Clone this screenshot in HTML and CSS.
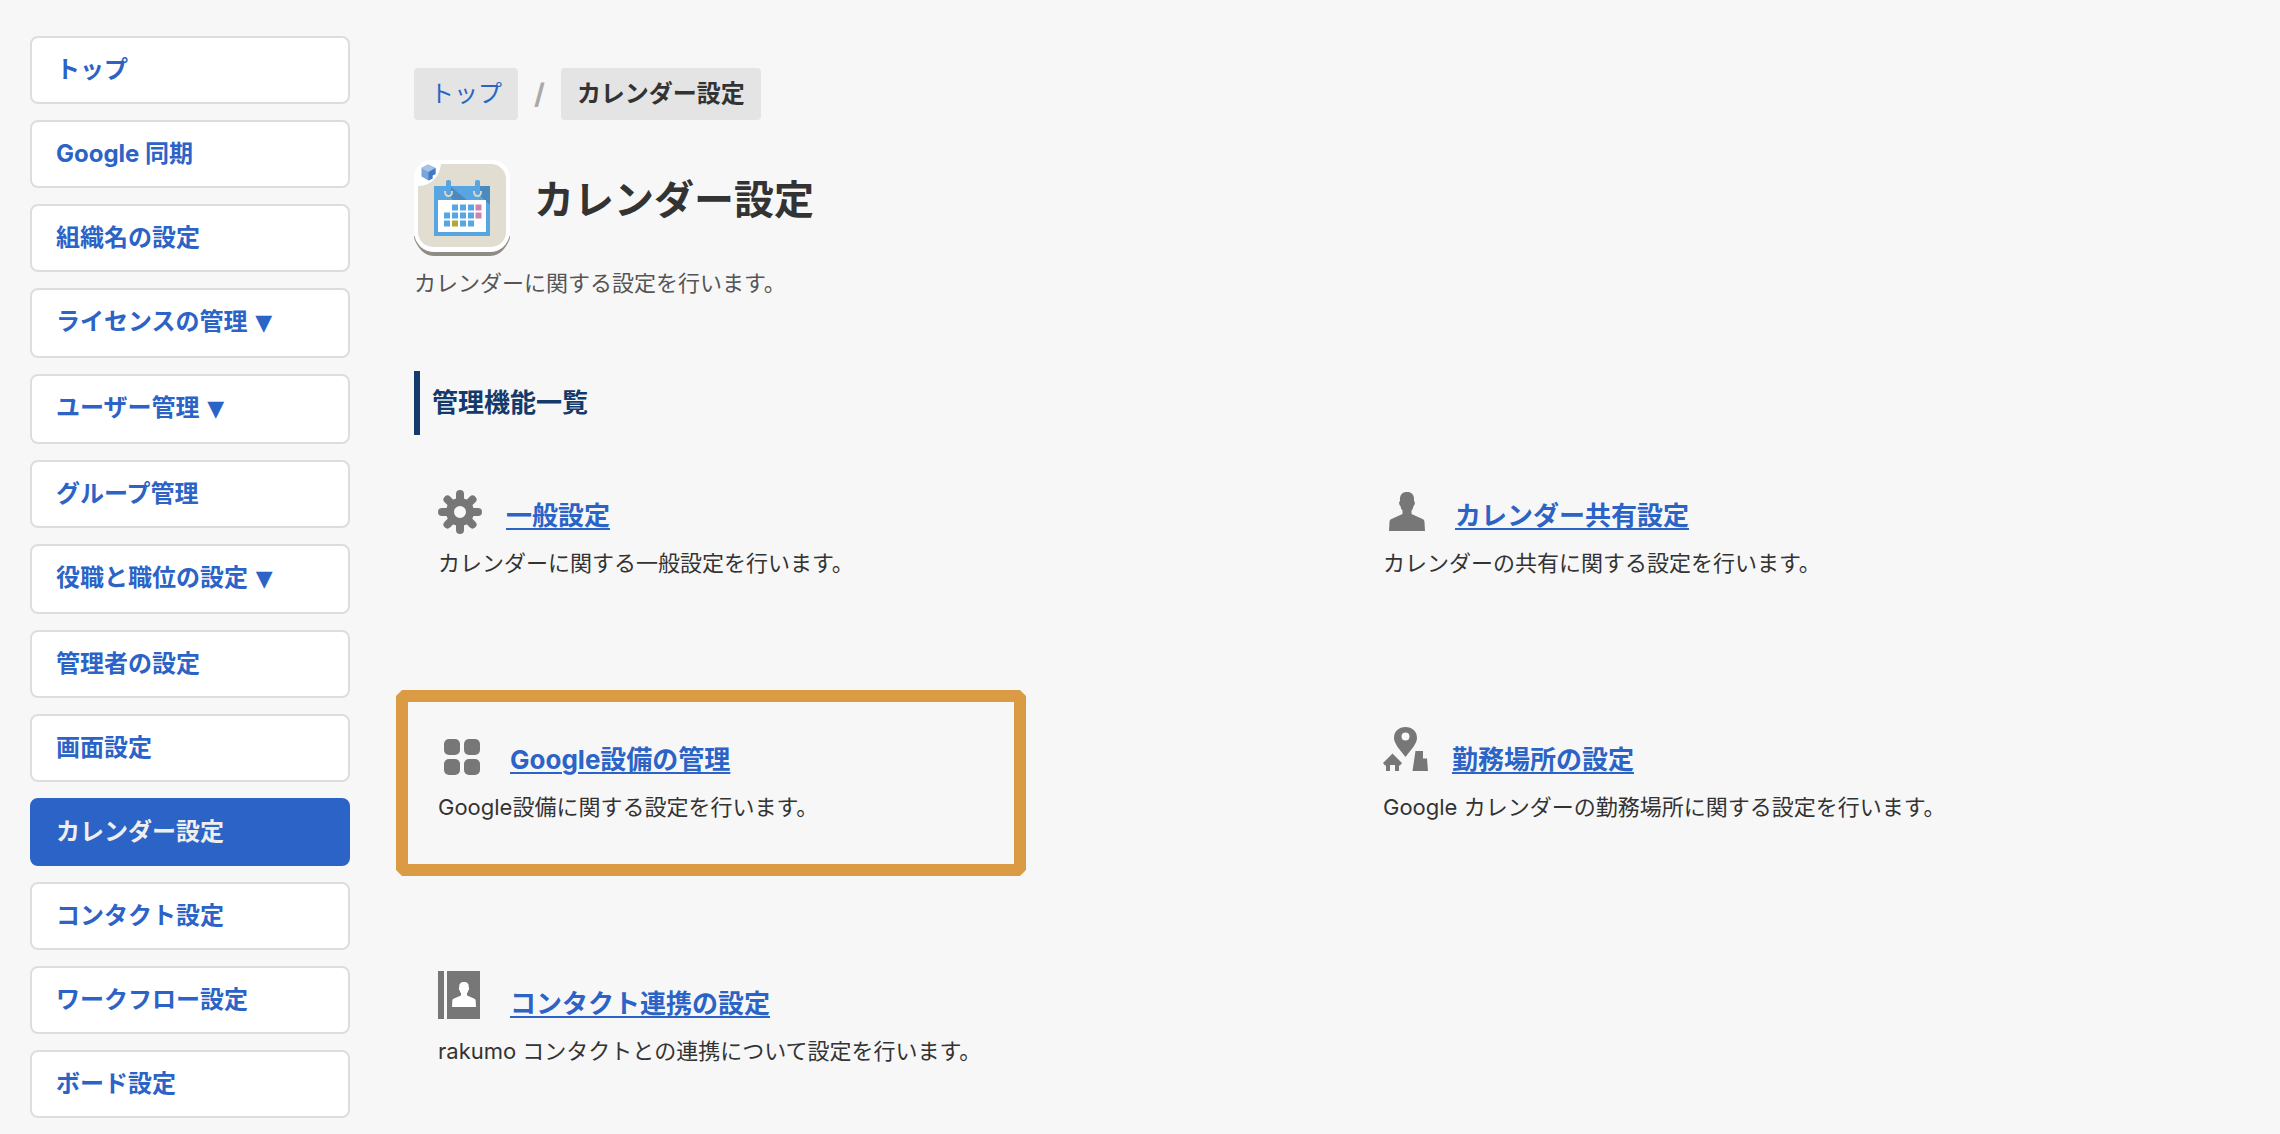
FILE: index.html
```html
<!DOCTYPE html>
<html lang="ja">
<head>
<meta charset="utf-8">
<meta name="viewport" content="width=device-width, initial-scale=1">
<title>カレンダー設定</title>
<link rel="stylesheet" href="styles.css">
</head>
<body>
<div class="layout">
  <nav class="sidebar" aria-label="設定メニュー">
    <a class="nav-item" href="#">トップ</a>
    <a class="nav-item" href="#">Google 同期</a>
    <a class="nav-item" href="#">組織名の設定</a>
    <a class="nav-item nav-parent" href="#">ライセンスの管理 <span class="caret">▼</span></a>
    <a class="nav-item nav-parent" href="#">ユーザー管理 <span class="caret">▼</span></a>
    <a class="nav-item" href="#">グループ管理</a>
    <a class="nav-item nav-parent" href="#">役職と職位の設定 <span class="caret">▼</span></a>
    <a class="nav-item" href="#">管理者の設定</a>
    <a class="nav-item" href="#">画面設定</a>
    <a class="nav-item active" href="#" aria-current="page">カレンダー設定</a>
    <a class="nav-item" href="#">コンタクト設定</a>
    <a class="nav-item" href="#">ワークフロー設定</a>
    <a class="nav-item" href="#">ボード設定</a>
  </nav>

  <main class="content">
    <div class="breadcrumb">
      <a class="crumb" href="#">トップ</a>
      <span class="divider">/</span>
      <span class="crumb current">カレンダー設定</span>
    </div>

    <header class="page-header">
      <svg class="app-icon" viewBox="0 0 96 96" aria-hidden="true">
        <path d="M0 76h96v2C92 89 85 96 76 96H20C11 96 4 89 0 78z" fill="#8f8c86"/>
        <path d="M18 0H78A18 18 0 0 1 96 18V74C94 85 86 92 76 92H20C10 92 2 85 0 74V18A18 18 0 0 1 18 0z" fill="#fff"/>
        <rect x="4" y="4" width="88" height="83" rx="15" fill="#e1ddd1"/>
        <path d="M0 18A18 18 0 0 1 18 0H27A22 24 0 0 1 4 26H0z" fill="#fff"/>
        <path d="M14 4.500l7.500 3.500v6l-3 1.500v3l-4 2-7-4v-8.500z" fill="#7ba4dc"/>
        <path d="M14 4.500l7.500 3.500-7 4-7.500-4z" fill="#a5c2e6"/>
        <path d="M21.500 8v6l-3 1.500v3l-4 2V12z" fill="#4478c2"/>
        <rect x="20" y="26" width="56" height="50" fill="#57a6e2"/>
        <path d="M36 26l17 14H39l-5-6zM65 26h11v19l-12-11z" fill="#4b8abc"/>
        <rect x="24" y="40" width="48" height="32" fill="#fff"/>
        <g fill="none" stroke="#d8d6cc" stroke-width="2">
          <path d="M31 31q0 5 3.500 5t3.500-5M60 31q0 5 3.500 5t3.500-5"/>
        </g>
        <rect x="32" y="20" width="5" height="14" rx="2" fill="#57a6e2"/>
        <rect x="61" y="20" width="5" height="14" rx="2" fill="#57a6e2"/>
        <path d="M38 44.500h6v6h-6zM46 44.500h6v6h-6zM54 44.500h6v6h-6zM30 52.500h6v6h-6zM38 52.500h6v6h-6zM46 52.500h6v6h-6zM54 52.500h6v6h-6zM30 60.500h6v6h-6zM46 60.500h6v6h-6zM54 60.500h6v6h-6z" fill="#57a6e2"/>
        <path d="M61.500 44.500h6v6h-6zM61.500 52.500h6v6h-6z" fill="#ce82ad"/>
        <path d="M38 60.500h6v6h-6z" fill="#b3a832"/>
      </svg>
      <h1>カレンダー設定</h1>
    </header>
    <p class="lead">カレンダーに関する設定を行います。</p>

    <h2>管理機能一覧</h2>

    <div class="features">
      <section class="feature">
        <div class="feature-title">
          <svg class="icon" width="44" height="52" viewBox="0 0 44 52" aria-hidden="true">
            <g stroke="#777" stroke-width="8" stroke-linecap="round">
              <path d="M22 11v8M22 39v8M4 29h8M32 29h8M9.500 16.500l5 5M29.500 36.500l5 5M34.500 16.500l-5 5M14.500 36.500l-5 5"/>
            </g>
            <circle cx="22" cy="29" r="10" fill="none" stroke="#777" stroke-width="8"/>
          </svg>
          <a href="#">一般設定</a>
        </div>
        <p>カレンダーに関する一般設定を行います。</p>
      </section>

      <section class="feature">
        <div class="feature-title">
          <svg class="icon" width="48" height="52" viewBox="0 0 48 52" aria-hidden="true">
            <path d="M24 9c5 0 7.500 3 7 9 1.500 1 1 4-.5 5-.5 2.500-1 3.500-2 4.500v3.500l11 5c1.500.7 2 1.500 2 3.500l.5 8.500H6l.5-8.500c0-2 .5-2.800 2-3.500l11-5v-3.500c-1-1-1.500-2-2-4.500-1.500-1-2-4-.5-5-.5-6 2-9 7-9z" fill="#777"/>
          </svg>
          <a href="#">カレンダー共有設定</a>
        </div>
        <p>カレンダーの共有に関する設定を行います。</p>
      </section>

      <section class="feature highlighted">
        <div class="feature-title">
          <svg class="icon" width="48" height="52" viewBox="0 0 48 52" aria-hidden="true">
            <g fill="#777">
              <rect x="6" y="12" width="16" height="16" rx="5"/>
              <rect x="26" y="12" width="16" height="16" rx="5"/>
              <rect x="6" y="32" width="16" height="16" rx="5"/>
              <rect x="26" y="32" width="16" height="16" rx="5"/>
            </g>
          </svg>
          <a href="#">Google設備の管理</a>
        </div>
        <p>Google設備に関する設定を行います。</p>
      </section>

      <section class="feature">
        <div class="feature-title">
          <svg class="icon" width="45" height="52" viewBox="0 0 45 52" aria-hidden="true">
            <g fill="#777">
              <path fill-rule="evenodd" d="M22.500 0C29 0 34 4 34 11c0 5-5 11-11.500 19C16 22 11 16 11 11 11 4 16 0 22.500 0zm0 5.500a4 4 0 1 0 0 8 4 4 0 0 0 0-8z"/>
              <path d="M9.500 26.500l9.500 9.500-2 2.500h-1V44h-4v-6H7v6H3v-5.500H2L0 36z"/>
              <path d="M32.500 24H40v7.500h4L45 44H29.500z"/>
            </g>
          </svg>
          <a href="#">勤務場所の設定</a>
        </div>
        <p>Google カレンダーの勤務場所に関する設定を行います。</p>
      </section>

      <section class="feature">
        <div class="feature-title">
          <svg class="icon" width="48" height="52" viewBox="0 0 48 52" aria-hidden="true">
            <path d="M0 0h6v48H0zM9 0h33v48H9z" fill="#777"/>
            <path d="M26 11c3.500 0 5 2 4.700 5 .8 1 .5 3-.5 3.500-.2 1.500-.7 2-1.200 2.700V24.500l7 3c1.300.6 1.700 1.200 1.700 2.500l.3 6H14l.3-6c0-1.300.4-1.900 1.700-2.500l7-3v-2.300c-.5-.7-1-1.200-1.200-2.700-1-.5-1.300-2.500-.5-3.500-.3-3 1.200-5 4.700-5z" fill="#fff"/>
          </svg>
          <a href="#">コンタクト連携の設定</a>
        </div>
        <p>rakumo コンタクトとの連携について設定を行います。</p>
      </section>
    </div>
  </main>
</div>
</body>
</html>
```
FILE: styles.css
```css
*,
*::after {
  box-sizing: border-box;
}

body {
  margin: 0;
  background: #f7f7f7;
  color: #333;
  font-family: Inter, "Noto Sans CJK JP", sans-serif;
  font-size: 22px;
  line-height: 36px;
}

h1,
h2,
p {
  margin: 0;
}

a {
  color: #2b63c6;
}

.layout {
  display: flex;
  align-items: flex-start;
  gap: 64px;
  padding-left: 30px;
}

/* Sidebar */
.sidebar {
  display: flex;
  flex: 0 0 320px;
  flex-direction: column;
  gap: 16px;
  padding: 36px 0 16px;
}

.nav-item {
  padding: 16px 24px;
  border: 2px solid #ddd;
  border-radius: 8px;
  background: #fff;
  font-size: 24px;
  font-weight: 700;
  line-height: 32px;
  text-decoration: none;
}

.nav-parent {
  padding-bottom: 18px;
}

.nav-item.active {
  border-color: #2b63c6;
  background: #2b63c6;
  color: #eee;
}

.caret {
  margin-left: 2px;
  font-family: "DejaVu Sans", sans-serif;
  font-size: 22px;
  font-weight: 400;
  line-height: 1;
}

/* Main column */
.content {
  flex: 1;
  min-width: 0;
  padding-top: 68px;
}

.breadcrumb {
  display: flex;
  align-items: center;
  gap: 16px;
  font-size: 24px;
}

.crumb {
  padding: 8px 16px;
  border-radius: 4px;
  background: #e4e4e4;
  text-decoration: none;
}

.crumb.current {
  font-weight: 700;
}

.divider {
  color: #aaa;
  font-size: 28px;
  font-weight: 700;
}

.page-header {
  display: flex;
  align-items: flex-start;
  gap: 24px;
  margin-top: 40px;
}

.app-icon {
  width: 96px;
  height: 96px;
}

h1 {
  font-size: 40px;
  line-height: 80px;
}

.lead {
  margin-top: 9px;
  color: #555;
}

h2 {
  margin-top: 70px;
  padding: 14px 12px;
  border-left: 6px solid #143a6b;
  color: #143a6b;
  font-size: 26px;
}

/* Feature grid */
.features {
  display: grid;
  grid-template-columns: repeat(2, minmax(0, 1fr));
  gap: 24px;
  margin-top: 24px;
}

.feature {
  position: relative;
  padding: 24px;
  min-height: 220px;
}

.feature-title {
  display: flex;
  align-items: flex-end;
  gap: 24px;
  margin-bottom: 10px;
}

.feature-title a {
  font-size: 26px;
  font-weight: 700;
  line-height: 38px;
  text-decoration-thickness: 2px;
  text-underline-offset: 3px;
}

.icon {
  flex: none;
}

/* Frame drawn over the card and slightly outside it */
.highlighted::after {
  content: "";
  position: absolute;
  top: -13px;
  left: -18px;
  width: 630px;
  height: 186px;
  border: 12px solid #db9a44;
  clip-path: polygon(6px 0, calc(100% - 6px) 0, 100% 6px, 100% calc(100% - 6px), calc(100% - 6px) 100%, 6px 100%, 0 calc(100% - 6px), 0 6px);
  pointer-events: none;
}
```
